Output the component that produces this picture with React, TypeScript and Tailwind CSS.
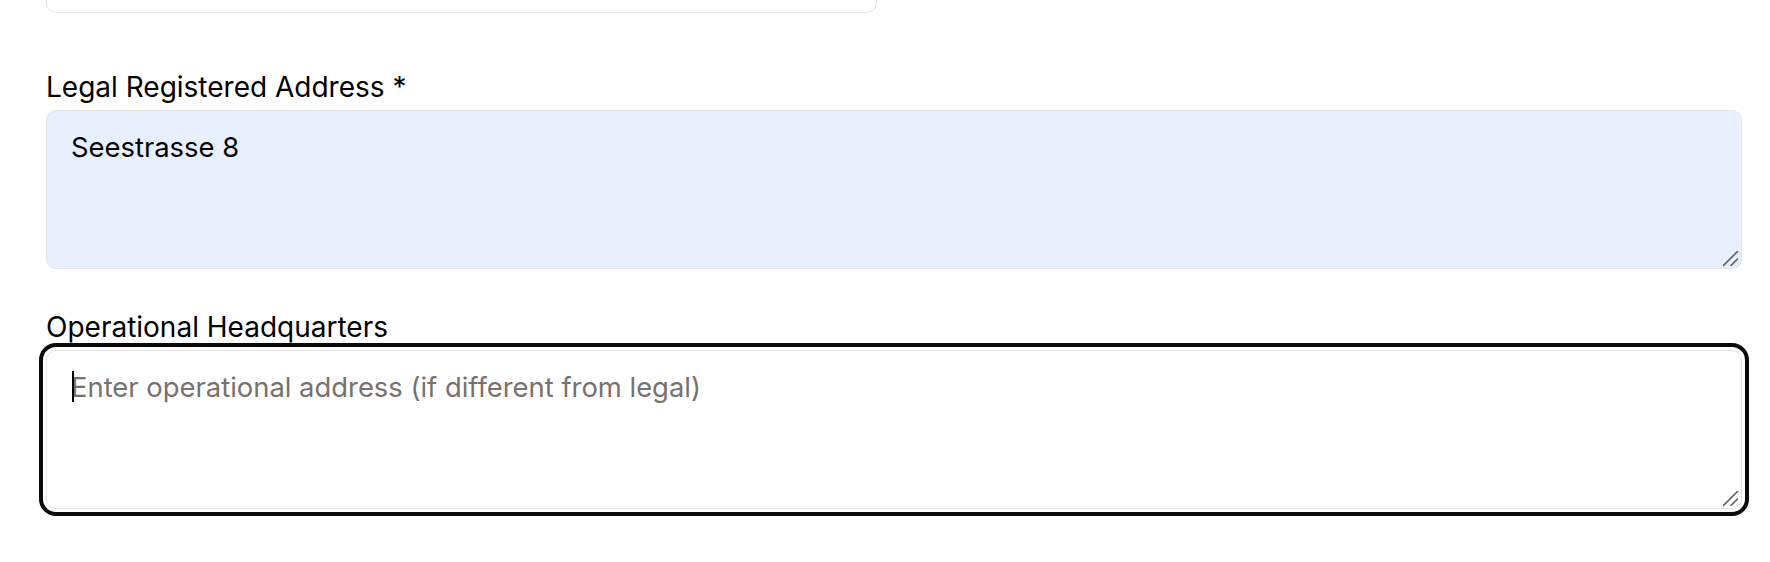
import React from "react";

function ResizeGrip() {
  return (
    <svg
      className="pointer-events-none absolute right-[3px] bottom-[2px]"
      width="16"
      height="16"
      viewBox="0 0 16 16"
      fill="none"
    >
      <line x1="0.5" y1="14.5" x2="14.5" y2="0.5" stroke="#5f5f5f" strokeWidth="1.6" strokeLinecap="round" />
      <line x1="8" y1="14.5" x2="14.5" y2="8" stroke="#5f5f5f" strokeWidth="1.6" strokeLinecap="round" />
    </svg>
  );
}

export default function App() {
  return (
    <div
      className="w-[1770px] h-[562px] overflow-hidden bg-white pl-[46px] pr-[28px] text-black"
      style={{ fontFamily: "Inter, 'Noto Sans', sans-serif" }}
    >
      <div className="grid grid-cols-2 gap-[34px]">
        <div className="h-[13px] border border-t-0 border-[#e7e5e4] rounded-b-[10px] bg-white" />
        <div />
      </div>

      <div className="mt-[56px] flex flex-col">
        <label className="block text-[28px] leading-[36px]">Legal Registered Address *</label>
        <div className="relative mt-[5px]">
          <textarea
            defaultValue="Seestrasse 8"
            className="block w-full h-[159px] resize-none rounded-[10px] border-[1.5px] border-[#e7e5e4] bg-[#e8f0fe] px-[24px] pt-[18px] pb-[20px] text-[27.4px] leading-[36px] text-black outline-none"
          />
          <ResizeGrip />
        </div>
      </div>

      <div className="mt-[40px] flex flex-col">
        <label className="block text-[28px] leading-[36px]">Operational Headquarters</label>
        <div className="relative mt-[5px]">
          <textarea
            placeholder="Enter operational address (if different from legal)"
            className="block w-full h-[159px] resize-none rounded-[10px] border-[1.5px] border-[#e7e5e4] bg-white px-[24px] pt-[18px] pb-[20px] text-[27.4px] leading-[36px] text-black placeholder:text-[#78716c] outline-4 outline-offset-[3px] outline-[#0a0a0a]"
          />
          <span className="pointer-events-none absolute left-[26px] top-[21px] h-[31px] w-[2px] bg-black" />
          <ResizeGrip />
        </div>
      </div>
    </div>
  );
}
